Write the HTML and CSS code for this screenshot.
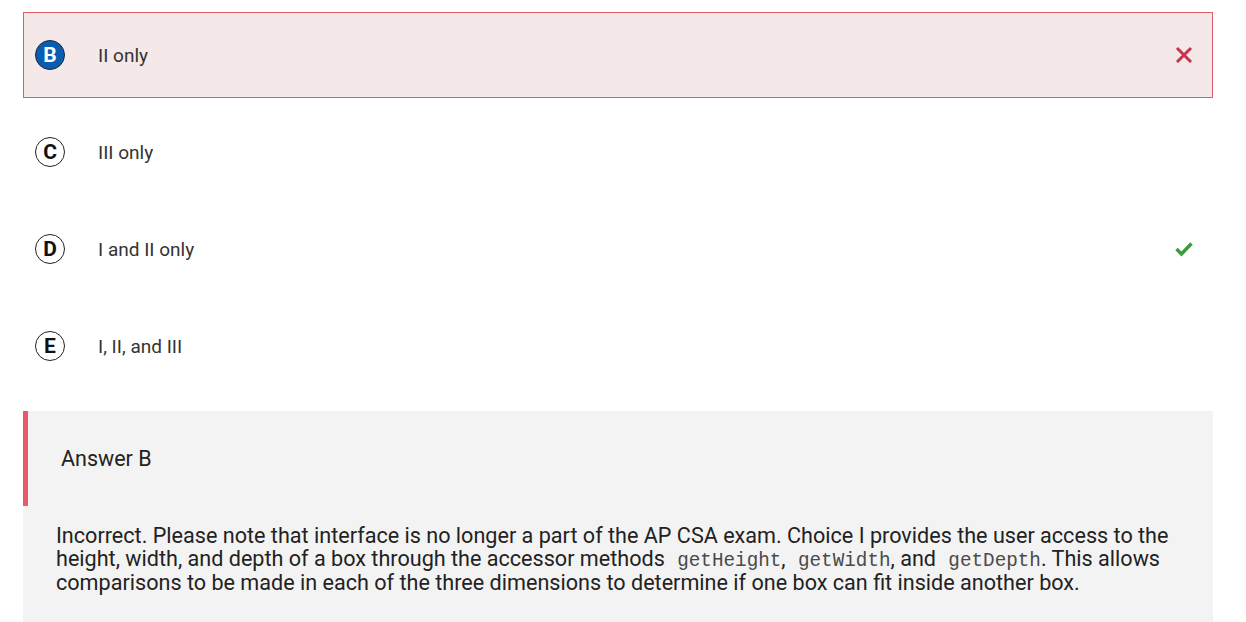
FILE: index.html
```html
<!DOCTYPE html>
<html>
<head>
<meta charset="utf-8">
<link rel="stylesheet" href="styles.css">
</head>
<body>
<div class="wrap">
  <div class="option selected">
    <span class="letter filled">B</span>
    <span class="text">II only</span>
    <svg class="mark" width="18" height="18" viewBox="0 0 18 18"><path d="M2 2 L16 16 M16 2 L2 16" stroke="#c8334c" stroke-width="3" stroke-linecap="butt" fill="none"/></svg>
  </div>
  <div class="option">
    <span class="letter">C</span>
    <span class="text">III only</span>
  </div>
  <div class="option">
    <span class="letter">D</span>
    <span class="text">I and II only</span>
    <svg class="mark" width="18" height="16" viewBox="0 0 18 16"><path d="M1.5 8 L6.5 13 L16.5 2.5" stroke="#3b9b3b" stroke-width="3.4" fill="none"/></svg>
  </div>
  <div class="option">
    <span class="letter">E</span>
    <span class="text">I, II, and III</span>
  </div>
  <div class="answer">
    <div class="answer-head">Answer B</div>
    <p class="explain">Incorrect. Please note that interface is no longer a part of the AP CSA exam. Choice I provides the user access to the height, width, and depth of a box through the accessor methods <code>getHeight</code>, <code>getWidth</code>, and <code>getDepth</code>. This allows comparisons to be made in each of the three dimensions to determine if one box can fit inside another box.</p>
  </div>
</div>
</body>
</html>
```
FILE: styles.css
```css
html, body {
  margin: 0;
  padding: 0;
  background: #ffffff;
}
body {
  font-family: Roboto, "Liberation Sans", sans-serif;
  color: #222222;
}
.wrap {
  width: 1190px;
  padding: 12px 0 0 23px;
}
.option {
  box-sizing: border-box;
  height: 86px;
  margin-bottom: 11px;
  border: 1px solid transparent;
  display: flex;
  align-items: center;
  padding: 0 19px 0 11px;
}
.option.selected {
  background: #f4e8e8;
  border-color: #e25c6c;
}
.letter {
  box-sizing: border-box;
  width: 30px;
  height: 30px;
  border-radius: 50%;
  border: 1.3px solid #222;
  display: flex;
  align-items: center;
  justify-content: center;
  font-weight: 700;
  font-size: 21px;
  color: #111;
  flex: none;
}
.letter.filled {
  background: #0a5cb0;
  border: 1.5px solid #1d2a3a;
  color: #ffffff;
}
.text {
  margin-left: 33px;
  font-size: 19px;
  color: #333;
  flex: 1;
}
.mark {
  flex: none;
}
.answer {
  margin-top: 22px;
  background: #f3f3f3;
  padding-bottom: 30px;
}
.answer-head {
  box-sizing: border-box;
  height: 95px;
  border-left: 5px solid #e8596c;
  display: flex;
  align-items: center;
  padding-left: 33px;
  font-size: 21.5px;
  color: #222;
}
.explain {
  margin: 0;
  padding: 19px 33px 0 33px;
  font-size: 21.6px;
  line-height: 22.5px;
  color: #222;
}
code {
  font-family: "Liberation Mono", monospace;
  font-size: 19.3px;
  color: #4a4a4a;
  padding-left: 7px;
}
```
